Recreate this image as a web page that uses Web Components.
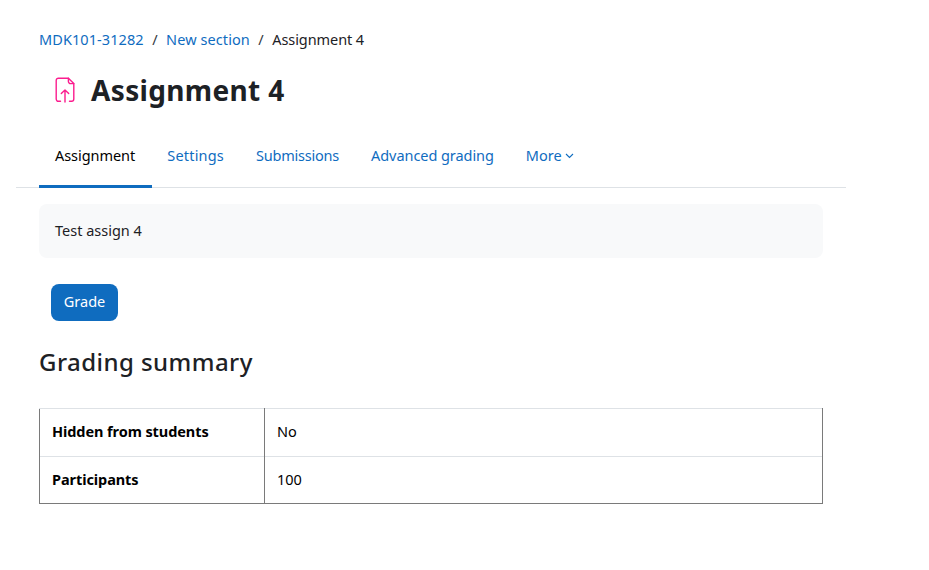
<!DOCTYPE html>
<html lang="en">
<head>
<meta charset="utf-8">
<title>Assignment 4</title>
<style>
    html, body { margin: 0; background: #fff; }
    body {
        font-family: "Noto Sans", "Open Sans", sans-serif;
        font-size: 14.5px;
        color: #1d2125;
    }
    page-shell { --azul: #0f6cbf; }
</style>
</head>
<body>
<page-shell>
    <bread-crumbs></bread-crumbs>
    <page-title>Assignment 4</page-title>
    <tab-bar></tab-bar>
    <desc-box>Test assign 4</desc-box>
    <grade-button>Grade</grade-button>
    <section-title>Grading summary</section-title>
    <summary-table></summary-table>
</page-shell>

<script>
class PageShell extends HTMLElement {
    constructor() {
        super();
        this.attachShadow({ mode: "open" });
        this.shadowRoot.innerHTML = `
            <style>
                :host { display: block; width: 784px; padding: 30px 0 0 39px; }
            </style>
            <slot></slot>
        `;
    }
}

class BreadCrumbs extends HTMLElement {
    constructor() {
        super();
        this.attachShadow({ mode: "open" });
        this.shadowRoot.innerHTML = `
            <style>
                :host { display: flex; height: 18px; line-height: 18px; white-space: nowrap; }
                a { color: var(--azul); text-decoration: none; letter-spacing: .08px; }
                .sep { padding: 0 8.5px; color: #343a40; }
                .actual { color: #1d2125; letter-spacing: -.08px; }
            </style>
            <a href="#">MDK101-31282</a><span class="sep">/</span>
            <a href="#">New section</a><span class="sep">/</span>
            <span class="actual">Assignment 4</span>
        `;
    }
}

class PageTitle extends HTMLElement {
    constructor() {
        super();
        this.attachShadow({ mode: "open" });
        this.shadowRoot.innerHTML = `
            <style>
                :host { display: flex; align-items: center; height: 44px; margin-top: 20px; padding-left: 16px; }
                svg { width: 20px; height: 26px; flex: none; }
                h1 { margin: 0 0 0 16px; font-size: 28px; letter-spacing: .35px; line-height: 44px; font-weight: 700; color: #1d2125; white-space: nowrap; }
            </style>
            <svg viewBox="0 0 20 26" fill="none" stroke="#fb1c8e" stroke-width="1.4" stroke-linecap="round" stroke-linejoin="round">
                <path d="M5.5 24.3H3.4a2.2 2.2 0 0 1-2.2-2.2V3.4a2.2 2.2 0 0 1 2.2-2.2h10l5.4 5.4v15.5a2.2 2.2 0 0 1-2.2 2.2h-2.1"/>
                <path d="M13.4 1.2v3.2a2.2 2.2 0 0 0 2.2 2.2h3.2"/>
                <path d="M10 25V13M6.3 16.6 10 12.9l3.7 3.7"/>
            </svg>
            <h1><slot></slot></h1>
        `;
    }
}

class TabBar extends HTMLElement {
    constructor() {
        super();
        this.attachShadow({ mode: "open" });
        this.shadowRoot.innerHTML = `
            <style>
                :host { display: block; position: relative; height: 61px; margin-top: 15px; }
                /* la linea sale de la columna: 23px a la izquierda y a la derecha */
                .linea { position: absolute; left: -23px; right: -23px; bottom: 0; height: 1px; background: #dee2e6; }
                nav { position: relative; display: flex; height: 100%; white-space: nowrap; }
                a { display: flex; align-items: center; gap: 3px; box-sizing: border-box; height: 100%; padding: 0 16px 5px; color: var(--azul); text-decoration: none; }
                a.activo { color: #000; border-bottom: 3px solid var(--azul); padding: 0 17px 2px 16px; margin-right: -1px; letter-spacing: -.05px; }
                a.s { letter-spacing: .2px; }
                a.m { letter-spacing: -.22px; }
                a.g { letter-spacing: -.06px; }
                svg { width: 9px; height: 6px; margin-top: 2px; }
            </style>
            <div class="linea"></div>
            <nav>
                <a class="activo" href="#">Assignment</a>
                <a class="s" href="#">Settings</a>
                <a class="m" href="#">Submissions</a>
                <a class="g" href="#">Advanced grading</a>
                <a href="#">More
                    <svg viewBox="0 0 9 6" fill="none" stroke="#0f6cbf" stroke-width="1.1"><path d="M1 1l3.5 3.5L8 1"/></svg>
                </a>
            </nav>
        `;
    }
}

class DescBox extends HTMLElement {
    constructor() {
        super();
        this.attachShadow({ mode: "open" });
        this.shadowRoot.innerHTML = `
            <style>
                :host { display: block; box-sizing: border-box; height: 54px; margin-top: 16px; padding: 0 16px; line-height: 52px; background: #f8f9fa; border-radius: 8px; }
            </style>
            <slot></slot>
        `;
    }
}

class GradeButton extends HTMLElement {
    constructor() {
        super();
        this.attachShadow({ mode: "open" });
        this.shadowRoot.innerHTML = `
            <style>
                :host { display: block; margin: 26px 0 0 12px; }
                button { display: block; width: 67px; height: 37px; padding: 0 0 4px; border: 0; border-radius: 8px; background: var(--azul); color: #fff; font: inherit; cursor: pointer; }
            </style>
            <button><slot></slot></button>
        `;
    }
}

class SectionTitle extends HTMLElement {
    constructor() {
        super();
        this.attachShadow({ mode: "open" });
        this.shadowRoot.innerHTML = `
            <style>
                :host { display: block; margin-top: 23px; }
                h2 { margin: 0; font-size: 24px; letter-spacing: .45px; line-height: 36px; font-weight: 500; color: #1d2125; }
            </style>
            <h2><slot></slot></h2>
        `;
    }
}

class SummaryTable extends HTMLElement {
    constructor() {
        super();
        this.attachShadow({ mode: "open" });
        this.shadowRoot.innerHTML = `
            <style>
                :host { display: block; margin-top: 28px; }
                table { width: 100%; box-sizing: border-box; border-collapse: collapse; table-layout: fixed; }
                th, td { height: 48px; padding: 0 12px 3px; box-sizing: border-box; text-align: left; border-top: 1px solid #dee2e6; color: #000; }
                th { width: 225px; font-weight: 700; letter-spacing: -.08px; border-left: 1px solid #7a7a7a; border-right: 1px solid #7a7a7a; }
                td { border-right: 1px solid #7a7a7a; font-weight: 400; }
                tr:last-child th, tr:last-child td { height: 47px; border-bottom: 1px solid #7a7a7a; }
            </style>
            <table>
                <tr><th>Hidden from students</th><td>No</td></tr>
                <tr><th>Participants</th><td>100</td></tr>
            </table>
        `;
    }
}

customElements.define("page-shell", PageShell);
customElements.define("bread-crumbs", BreadCrumbs);
customElements.define("page-title", PageTitle);
customElements.define("tab-bar", TabBar);
customElements.define("desc-box", DescBox);
customElements.define("grade-button", GradeButton);
customElements.define("section-title", SectionTitle);
customElements.define("summary-table", SummaryTable);
</script>
</body>
</html>
